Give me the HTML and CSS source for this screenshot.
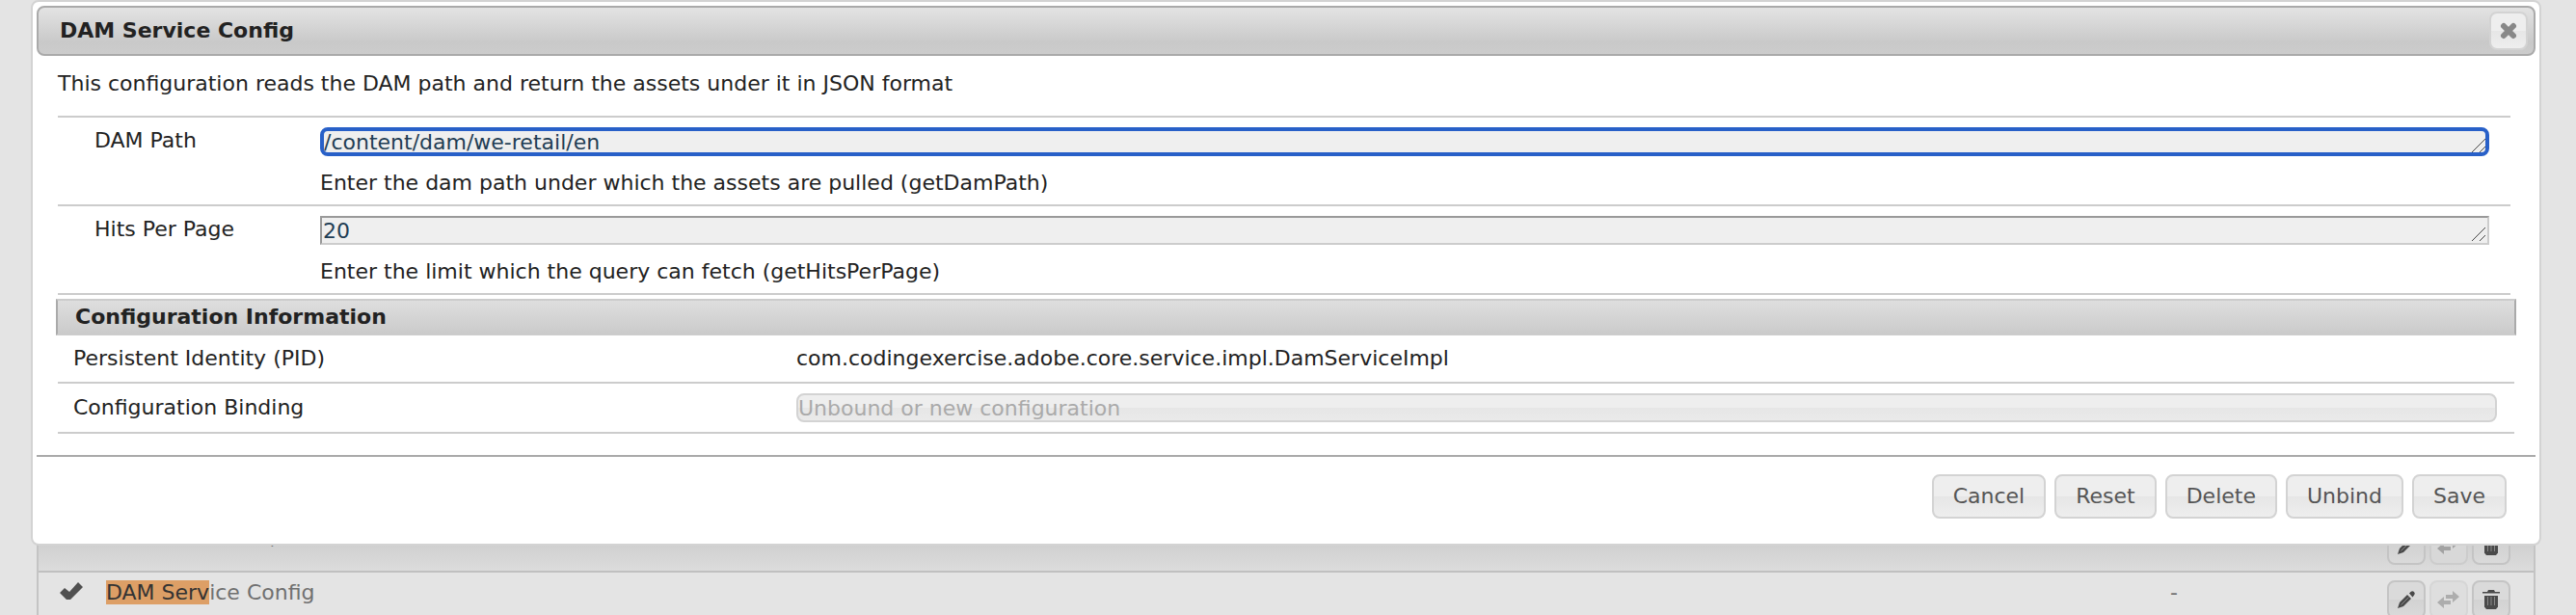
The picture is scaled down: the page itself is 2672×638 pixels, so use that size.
FILE: index.html
```html
<!DOCTYPE html>
<html lang="en">
<head>
<meta charset="utf-8">
<title>DAM Service Config</title>
<link rel="stylesheet" href="styles.css">
</head>
<body>
<svg class="defs" aria-hidden="true">
  <symbol id="pencil" viewBox="0 0 20 20"><path d="M1 19l2-6L11 5l4 4L7 17z"/><path d="M13 3.500l1.500-1.500a2.500 2.500 0 0 1 3.500 0 2.500 2.500 0 0 1 0 3.500L16.500 7.500z"/><path class="slats" d="M4.500 15.500l8-8"/></symbol>
  <symbol id="swap" viewBox="0 0 24 18"><path d="M9 4h7V0l7 6-7 6V8H9z"/><path d="M14 10v4H7v4l-7-6 7-6v4z"/></symbol>
  <symbol id="trash" viewBox="0 0 18 20"><path d="M0 3.500V2h5l1-2h6l1 2h5v1.500z"/><path d="M2 6h14v11.500L14 20H4l-2-2.500z"/><path class="slats" d="M5.500 7v9M9 7v9M12.500 7v9"/></symbol>
  <symbol id="grip" viewBox="0 0 16 16"><path d="M1 15L15 1M9 15l6-6"/></symbol>
</svg>

<form class="dialog">
  <header class="titlebar">
    <h1>DAM Service Config</h1>
    <button class="btn icon-btn" type="button" aria-label="Close"><svg class="cross" viewBox="0 0 20 20"><path d="M5 5l10 10M15 5L5 15"/></svg></button>
  </header>
  <div class="content">
    <p class="intro">This configuration reads the DAM path and return the assets under it in JSON format</p>
    <div class="fields">
      <div class="field">
        <label for="path">DAM Path</label>
        <div class="control">
          <textarea class="focused" id="path" rows="1">/content/dam/we-retail/en</textarea>
          <svg class="grip" aria-hidden="true"><use href="#grip"/></svg>
          <p>Enter the dam path under which the assets are pulled (getDamPath)</p>
        </div>
      </div>
      <div class="field">
        <label for="hits">Hits Per Page</label>
        <div class="control">
          <textarea id="hits" rows="1">20</textarea>
          <svg class="grip" aria-hidden="true"><use href="#grip"/></svg>
          <p>Enter the limit which the query can fetch (getHitsPerPage)</p>
        </div>
      </div>
    </div>
    <h2>Configuration Information</h2>
    <div class="info">
      <span>Persistent Identity (PID)</span>
      <span>com.codingexercise.adobe.core.service.impl.DamServiceImpl</span>
    </div>
    <div class="info">
      <label for="binding">Configuration Binding</label>
      <input class="binding" id="binding" type="text" value="Unbound or new configuration" disabled>
    </div>
  </div>
  <footer class="actions">
    <button class="btn" type="button">Cancel</button>
    <button class="btn" type="button">Reset</button>
    <button class="btn" type="button">Delete</button>
    <button class="btn" type="button">Unbind</button>
    <button class="btn" type="button">Save</button>
  </footer>
</form>

<table class="list">
  <tbody>
    <tr class="odd">
      <td class="mark"></td>
      <td>Content Access, Sets</td>
      <td class="bundle"></td>
      <td class="tools"><div>
        <button class="btn icon-btn" type="button" aria-label="Edit"><svg class="pencil"><use href="#pencil"/></svg></button>
        <button class="btn icon-btn" type="button" aria-label="Unbind" disabled><svg class="swap"><use href="#swap"/></svg></button>
        <button class="btn icon-btn" type="button" aria-label="Delete"><svg class="trash"><use href="#trash"/></svg></button>
      </div></td>
    </tr>
    <tr>
      <td class="mark"><svg class="check" viewBox="0 0 24 20"><path d="M0 12l5-5 5 4 9-10 5 5-13 13H7z"/></svg></td>
      <td><mark>DAM Serv</mark>ice Config</td>
      <td class="bundle">-</td>
      <td class="tools"><div>
        <button class="btn icon-btn" type="button" aria-label="Edit"><svg class="pencil"><use href="#pencil"/></svg></button>
        <button class="btn icon-btn" type="button" aria-label="Unbind" disabled><svg class="swap"><use href="#swap"/></svg></button>
        <button class="btn icon-btn" type="button" aria-label="Delete"><svg class="trash"><use href="#trash"/></svg></button>
      </div></td>
    </tr>
  </tbody>
</table>
</body>
</html>
```

FILE: styles.css
```css
* { box-sizing: border-box; }

body {
  margin: 0;
  padding: 0 36px 0 32px;
  height: 100vh;
  overflow: hidden;
  background: #e4e4e4;
  color: #222;
  font: 22px/26px Verdana, "DejaVu Sans", sans-serif;
}

h1, h2, p { margin: 0; font-size: 22px; }
button, input, textarea { font: inherit; margin: 0; }
.defs { display: none; }

.dialog {
  position: relative;
  z-index: 1;
  padding: 4px;
  border: 2px solid #d3d3d3;
  border-radius: 8px;
  background: #fff;
}

.titlebar {
  display: flex;
  align-items: center;
  justify-content: space-between;
  height: 52px;
  padding: 0 6px 0 22px;
  border: 2px solid #aaa;
  border-radius: 8px;
  background: linear-gradient(#e3e3e3, #c9c9c9 75%, #ccc);
}

.btn {
  height: 46px;
  padding: 0 20px;
  border: 2px solid #d3d3d3;
  border-radius: 8px;
  background: linear-gradient(#eee 50%, #e6e6e6 50%, #eee);
  color: #555;
}

.icon-btn {
  display: flex;
  align-items: center;
  justify-content: center;
  width: 40px;
  height: 40px;
  padding: 0;
}

.cross { width: 20px; height: 20px; fill: none; stroke: #888; stroke-width: 6; stroke-linecap: round; }

.content { padding: 16px 20px 22px; }
.intro { padding: 0 2px; margin-bottom: 20px; }

.fields {
  margin: 0 6px 4px 2px;
  border-bottom: 2px solid #ccc;
}
.field {
  display: flex;
  padding: 10px 22px 0 38px;
  border-top: 2px solid #ccc;
  height: 92px;
}
.field label { width: 234px; padding-top: 1px; }
.control { position: relative; flex: 1; }
.control p { padding-top: 15px; }

textarea {
  display: block;
  width: 100%;
  height: 30px;
  padding: 1px;
  border: 2px solid;
  border-color: #999 #ccc #ccc #999;
  border-radius: 0;
  background: #efefef;
  color: #1f3d54;
  line-height: 26px;
  overflow: hidden;
  resize: none;
  outline: none;
}
.focused { border: 4px solid #2860c8; border-radius: 8px; padding: 0; line-height: 24px; }
.grip {
  position: absolute;
  top: 11px;
  right: 3px;
  width: 16px;
  height: 16px;
  fill: none;
  stroke: #444;
  stroke-width: 1;
  pointer-events: none;
}

h2 {
  height: 38px;
  padding: 4px 18px;
  border: 2px solid #aaa;
  border-top-color: #ccc;
  border-bottom-color: #ccc;
  background: linear-gradient(#dedede, #cbcbcb);
}

.info {
  display: grid;
  grid-template-columns: 750px 1fr;
  align-items: center;
  margin: 0 2px;
  padding: 0 18px 0 16px;
  height: 50px;
  border-bottom: 2px solid #ccc;
}
.info + .info { height: 52px; }
.binding {
  width: 100%;
  height: 30px;
  padding: 0;
  border: 2px solid #d3d3d3;
  border-radius: 8px;
  background: linear-gradient(#eee 50%, #e6e6e6 50%, #eaeaea);
  color: #aaa;
}

.actions {
  display: flex;
  justify-content: flex-end;
  gap: 9px;
  padding: 18px 30px 22px;
  border-top: 2px solid #aaa;
}

.list {
  width: calc(100% - 12px);
  margin: -28px 6px 0;
  border-collapse: separate;
  border-spacing: 0;
  border: solid #c4c4c4;
  border-width: 0 2px;
  color: #707070;
}
.list td { height: 56px; padding: 8px 0 0; vertical-align: top; border-bottom: 2px solid #c0c0c0; }
.list .odd td { padding-top: 7px; background: linear-gradient(#d0d0d0 50%, #dcdcdc); }
.list .odd .tools { padding-top: 8px; }
.mark { width: 70px; }
.check { display: block; width: 24px; height: 20px; margin: 1px 0 0 22px; fill: #505050; }
mark { background: #dd9f66; color: #333; }
.bundle { width: 225px; }
.tools { width: 152px; }
.tools div { display: flex; gap: 4px; }
.tools .btn { border-color: #c4c4c4; background: linear-gradient(#dadada 50%, #d2d2d2 50%, #dadada); fill: #4a4a4a; }
.tools .btn:disabled { border-color: #d6d6d6; background: #dedede; fill: #adadad; }
.odd .btn:disabled { border-color: #ccc; background: #d8d8d8; fill: #a2a2a2; }
.pencil { width: 20px; height: 20px; }
.swap { width: 24px; height: 18px; }
.trash { width: 18px; height: 20px; }
.slats { fill: none; stroke: #888; stroke-width: 1; }
```
